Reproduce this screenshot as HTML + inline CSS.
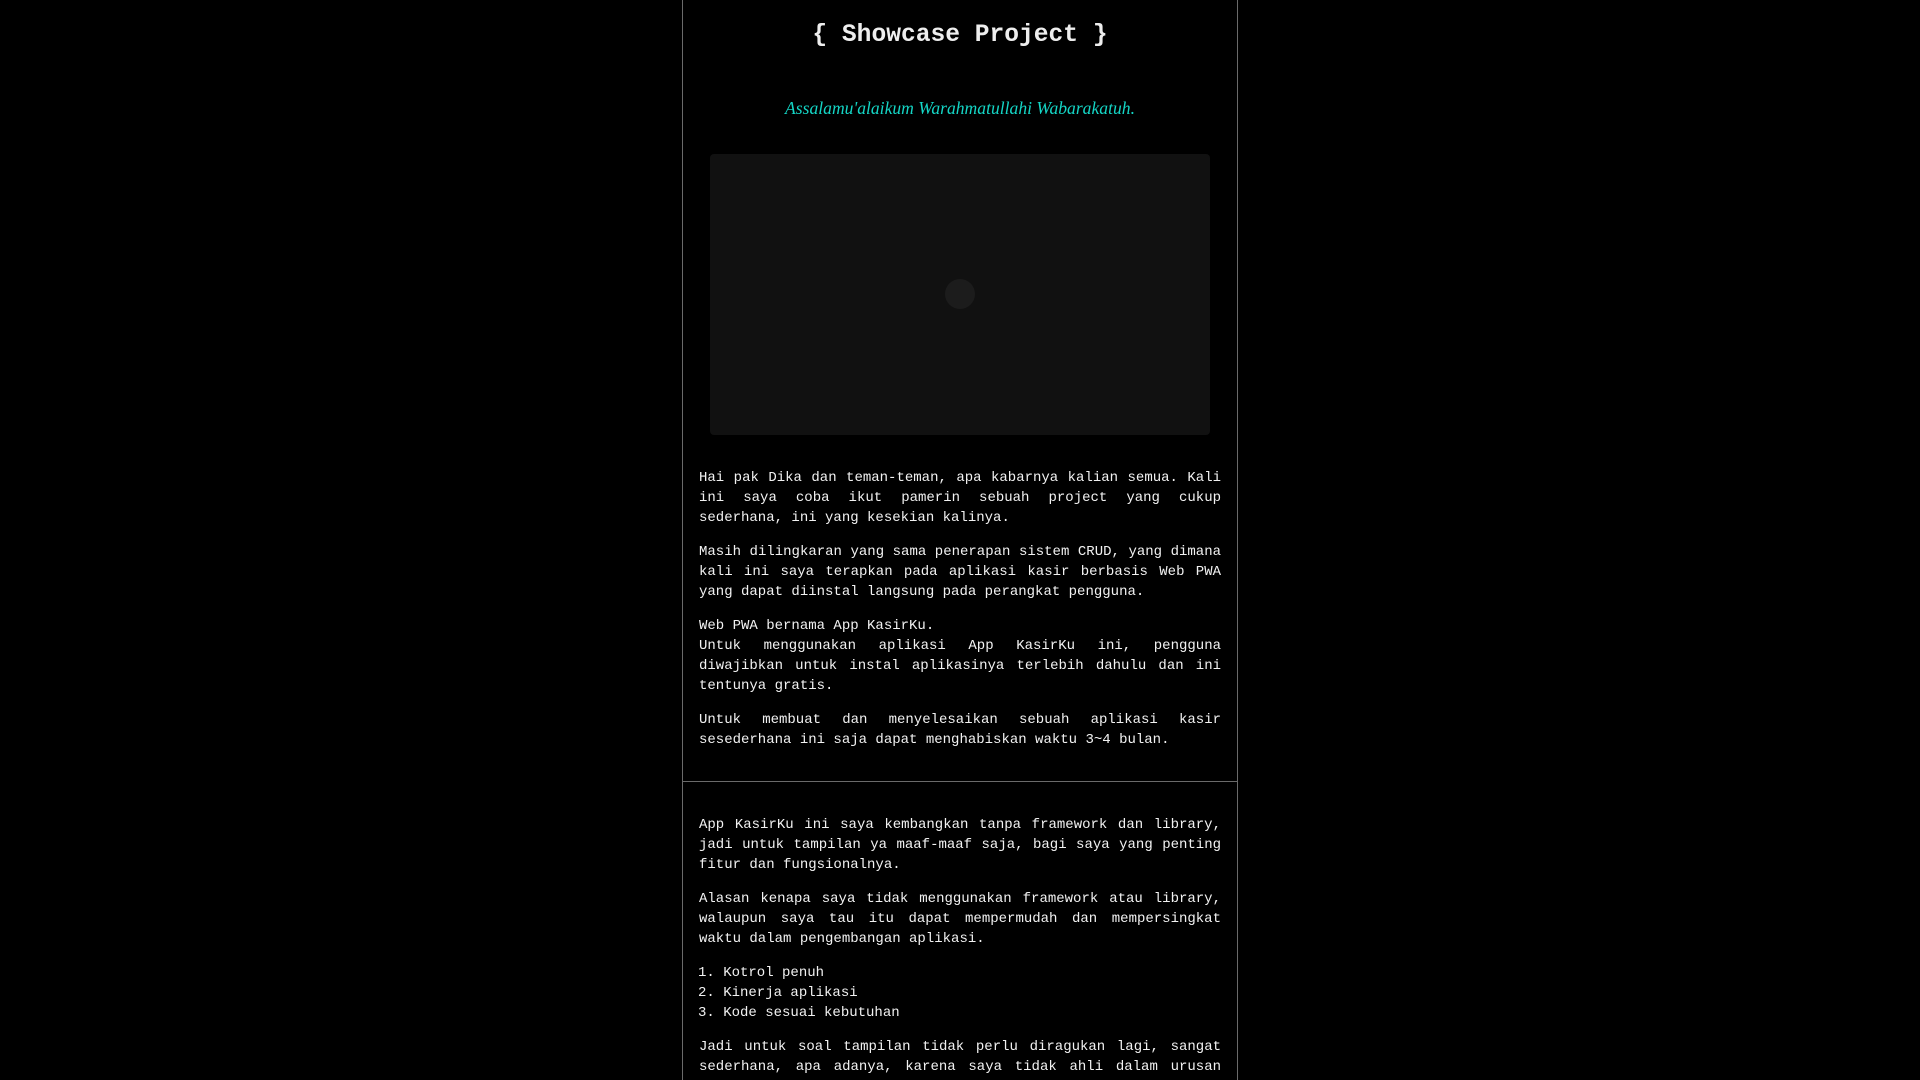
<!DOCTYPE html>
<html><head><meta charset="utf-8"><style>
html,body{margin:0;padding:0;background:#000;width:1920px;height:1080px;overflow:hidden}
.wrap{position:absolute;left:682px;top:0;width:554px;border-left:1px solid #6a6a6a;border-right:1px solid #6a6a6a;height:1080px;overflow:hidden}
.sec{box-sizing:border-box;padding:0 16px}
.s1{height:782px;border-bottom:1px solid #6a6a6a}
h1{margin:0;padding-top:3px;height:63px;font:bold 24.6px "Liberation Mono",monospace;line-height:66px;text-align:center;color:#eee}
.greet{margin:22px 0 0;height:40px;font:italic 17.6px "Liberation Serif",serif;line-height:40px;text-align:center;color:#14d6c6}
.vid{margin:26px auto 0;width:500px;height:281px;background:#111;border-radius:4px;position:relative}
.vid:after{content:"";position:absolute;left:235px;top:125px;width:30px;height:30px;border-radius:50%;background:#1c1c1c}
p{margin:0 0 14px;font:14px/20px "Liberation Mono",monospace;color:#f2f2f2;text-align:justify}
.s1 p:first-of-type{margin-top:33px}
.s2 p:first-child{margin-top:33px}
.list{margin:0 0 14px -1px;font:14px/20px "Liberation Mono",monospace;color:#f2f2f2}
</style></head><body>
<div class="wrap">
<div class="sec s1">
<h1>{ Showcase Project }</h1>
<div class="greet">Assalamu'alaikum Warahmatullahi Wabarakatuh.</div>
<div class="vid"></div>
<p>Hai pak Dika dan teman-teman, apa kabarnya kalian semua. Kali ini saya coba ikut pamerin sebuah project yang cukup sederhana, ini yang kesekian kalinya.</p>
<p>Masih dilingkaran yang sama penerapan sistem CRUD, yang dimana kali ini saya terapkan pada aplikasi kasir berbasis Web PWA yang dapat diinstal langsung pada perangkat pengguna.</p>
<p>Web PWA bernama App KasirKu.<br>Untuk menggunakan aplikasi App KasirKu ini, pengguna diwajibkan untuk instal aplikasinya terlebih dahulu dan ini tentunya gratis.</p>
<p>Untuk membuat dan menyelesaikan sebuah aplikasi kasir sesederhana ini saja dapat menghabiskan waktu 3~4 bulan.</p>
</div>
<div class="sec s2">
<p>App KasirKu ini saya kembangkan tanpa framework dan library, jadi untuk tampilan ya maaf-maaf saja, bagi saya yang penting fitur dan fungsionalnya.</p>
<p>Alasan kenapa saya tidak menggunakan framework atau library, walaupun saya tau itu dapat mempermudah dan mempersingkat waktu dalam pengembangan aplikasi.</p>
<div class="list">1. Kotrol penuh<br>2. Kinerja aplikasi<br>3. Kode sesuai kebutuhan</div>
<p>Jadi untuk soal tampilan tidak perlu diragukan lagi, sangat sederhana, apa adanya, karena saya tidak ahli dalam urusan desain tampilan aplikasi.</p>
</div>
</div>
</body></html>
